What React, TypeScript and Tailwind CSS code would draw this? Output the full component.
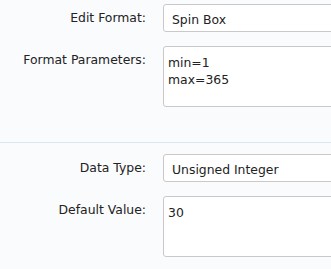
export default function App() {
  const font = { fontFamily: '"DejaVu Sans", Verdana, sans-serif' };
  return (
    <div className="w-[331px] h-[269px] overflow-hidden bg-[#fafbfd] text-[12.4px] text-[#222]" style={font}>
      <div className="pt-[4px]">
        <div className="flex items-start">
          <label className="w-[146px] shrink-0 text-right pt-[5px]">Edit Format:</label>
          <div className="ml-[17px] w-[200px] shrink-0 h-[28px] bg-white border border-[#c9c9c9] rounded-[3px] pl-[8px] pt-[6px]">
            Spin Box
          </div>
        </div>
        <div className="flex items-start mt-[14px]">
          <label className="w-[146px] shrink-0 text-right pt-[5px]">Format Parameters:</label>
          <div className="ml-[17px] w-[200px] shrink-0 h-[61px] bg-white border border-[#c9c9c9] rounded-[3px] pl-[4px] pt-[7px] leading-[17px]">
            min=1
            <br />
            max=365
          </div>
        </div>
      </div>
      <div className="mt-[35px] border-t border-[#dce8ee]" />
      <div className="pt-[11px]">
        <div className="flex items-start">
          <label className="w-[146px] shrink-0 text-right pt-[5px]">Data Type:</label>
          <div className="ml-[17px] w-[200px] shrink-0 h-[28px] bg-white border border-[#c9c9c9] rounded-[3px] pl-[8px] pt-[6px]">
            Unsigned Integer
          </div>
        </div>
        <div className="flex items-start mt-[14px]">
          <label className="w-[146px] shrink-0 text-right pt-[5px]">Default Value:</label>
          <div className="ml-[17px] w-[200px] shrink-0 h-[61px] bg-white border border-[#c9c9c9] rounded-[3px] pl-[4px] pt-[7px] leading-[17px]">
            30
          </div>
        </div>
      </div>
    </div>
  );
}
